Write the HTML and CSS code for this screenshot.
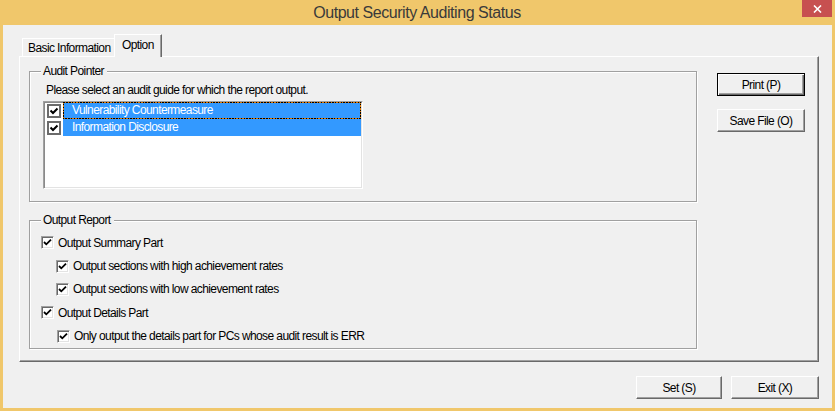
FILE: index.html
```html
<!DOCTYPE html>
<html>
<head>
<meta charset="utf-8">
<link rel="stylesheet" href="styles.css">
</head>
<body>
<div class="window">
  <div class="titlebar">
    <div class="title">Output Security Auditing Status</div>
    <div class="close">
      <svg width="9" height="8" viewBox="0 0 9 8"><path d="M1 0.5 L8 7.5 M8 0.5 L1 7.5" stroke="#fff" stroke-width="1.6" fill="none"/></svg>
    </div>
  </div>
  <div class="client">
    <div class="tabs">
      <div class="tab tab-basic">Basic Information</div>
      <div class="tab tab-option">Option</div>
    </div>
    <div class="panel">
      <div class="groups">
        <fieldset class="group audit">
          <legend>Audit Pointer</legend>
          <div class="hint">Please select an audit guide for which the report output.</div>
          <div class="listbox">
            <div class="item">
              <span class="lcb"><svg width="10" height="10" viewBox="0 0 10 10"><path d="M1.5 4.5 L4 7 L8.5 2.5" stroke="#000" stroke-width="2" fill="none"/></svg></span>
              <span class="label focus">Vulnerability Countermeasure</span>
            </div>
            <div class="item">
              <span class="lcb"><svg width="10" height="10" viewBox="0 0 10 10"><path d="M1.5 4.5 L4 7 L8.5 2.5" stroke="#000" stroke-width="2" fill="none"/></svg></span>
              <span class="label">Information Disclosure</span>
            </div>
          </div>
        </fieldset>
        <fieldset class="group report">
          <legend>Output Report</legend>
          <div class="row lvl0"><span class="cb"><svg width="11" height="11" viewBox="0 0 11 11"><path d="M2 5 L4.3 7.3 L9 2.6" stroke="#000" stroke-width="1.8" fill="none"/></svg></span>Output Summary Part</div>
          <div class="row lvl1"><span class="cb"><svg width="11" height="11" viewBox="0 0 11 11"><path d="M2 5 L4.3 7.3 L9 2.6" stroke="#000" stroke-width="1.8" fill="none"/></svg></span>Output sections with high achievement rates</div>
          <div class="row lvl1"><span class="cb"><svg width="11" height="11" viewBox="0 0 11 11"><path d="M2 5 L4.3 7.3 L9 2.6" stroke="#000" stroke-width="1.8" fill="none"/></svg></span>Output sections with low achievement rates</div>
          <div class="row lvl0"><span class="cb"><svg width="11" height="11" viewBox="0 0 11 11"><path d="M2 5 L4.3 7.3 L9 2.6" stroke="#000" stroke-width="1.8" fill="none"/></svg></span>Output Details Part</div>
          <div class="row lvl2"><span class="cb"><svg width="11" height="11" viewBox="0 0 11 11"><path d="M2 5 L4.3 7.3 L9 2.6" stroke="#000" stroke-width="1.8" fill="none"/></svg></span>Only output the details part for PCs whose audit result is ERR</div>
        </fieldset>
      </div>
      <div class="side">
        <button class="btn btn-default">Print (P)</button>
        <button class="btn">Save File (O)</button>
      </div>
    </div>
    <div class="footer">
      <button class="btn btn-set">Set (S)</button>
      <button class="btn btn-exit">Exit (X)</button>
    </div>
  </div>
</div>
</body>
</html>
```
FILE: styles.css
```css
* { box-sizing: border-box; }
body {
  margin: 0;
  font-family: "Liberation Sans", Arial, sans-serif;
  font-size: 12px;
  letter-spacing: -0.6px;
  color: #000;
}
.window {
  width: 835px;
  height: 411px;
  background: #f0c76b;
  display: flex;
  flex-direction: column;
}
.titlebar {
  height: 25px;
  display: grid;
  grid-template-columns: 1fr auto 1fr;
  padding-right: 3px;
}
.title {
  grid-column: 2;
  font-size: 16px;
  letter-spacing: -0.45px;
  line-height: 25px;
  color: #3a3a3a;
  padding-left: 2px;
}
.close {
  grid-column: 3;
  justify-self: end;
  width: 30px;
  height: 17px;
  background: #c75050;
  display: flex;
  align-items: center;
  justify-content: center;
}
.client {
  flex: 1;
  margin: 0 3px 3px;
  background: #f0f0f0;
  padding: 9px 13px 0 16px;
  display: flex;
  flex-direction: column;
}
.tabs {
  display: flex;
  align-items: flex-start;
  height: 23px;
  margin-bottom: -1px;
  position: relative;
  z-index: 1;
}
.tab {
  background: #f0f0f0;
  border-top: 1px solid #fff;
  border-left: 1px solid #fff;
  line-height: 16px;
  white-space: nowrap;
}
.tab-basic {
  margin-top: 4px;
  margin-left: 3px;
  width: 92px;
  height: 18px;
  padding: 1px 0 0 5px;
}
.tab-option {
  width: 48px;
  height: 23px;
  padding: 2px 0 0 7px;
  border-right: 1px solid #696969;
  box-shadow: inset -1px 0 0 #a0a0a0;
}
.panel {
  width: 800px;
  height: 306px;
  border: 1px solid;
  border-color: #fff #696969 #696969 #fff;
  box-shadow: inset -1px -1px 0 #a0a0a0;
  display: flex;
  align-items: flex-start;
  padding: 7px 0 0 9px;
}
.groups {
  width: 668px;
  display: flex;
  flex-direction: column;
}
.group {
  margin: 0;
  border: 1px solid #a0a0a0;
  box-shadow: 1px 1px 0 #fff, inset 1px 1px 0 #fff;
  padding: 0 0 0 13px;
  min-width: 0;
}
.group legend {
  padding: 0 3px 0 2px;
  margin-left: -2px;
  line-height: 14px;
  background: #f0f0f0;
}
.audit {
  padding-top: 5px;
  padding-bottom: 12px;
}
.hint {
  line-height: 14px;
  margin-left: 3px;
  margin-bottom: 4px;
}
.listbox {
  width: 320px;
  height: 88px;
  background: #fff;
  border: 1px solid;
  border-color: #a0a0a0 #fff #fff #a0a0a0;
  box-shadow: inset 1px 1px 0 #8a8a8a, inset -1px -1px 0 #e3e3e3;
  padding: 0 1px 0 2px;
}
.item {
  display: flex;
  align-items: center;
  height: 17px;
}
.lcb {
  width: 14px;
  height: 14px;
  border: 2px solid #6b6b6b;
  background: #fff;
  display: flex;
  align-items: center;
  justify-content: center;
  margin-left: 1px;
  flex: none;
}
.label {
  margin-left: 2px;
  flex: 1;
  height: 17px;
  background: #3399ff;
  color: #fff;
  padding-left: 9px;
  line-height: 16px;
  white-space: nowrap;
}
.label.focus {
  border: 1px solid transparent;
  border-image: repeating-linear-gradient(45deg, #000 0 1px, #e07800 1px 2px) 1;
  padding-left: 8px;
  line-height: 14px;
}
.report {
  margin-top: 11px;
  padding-top: 4px;
  padding-bottom: 0;
}
.row {
  height: 23.4px;
  display: flex;
  align-items: center;
  white-space: nowrap;
}
.lvl0 { margin-left: -2px; }
.lvl1 { margin-left: 13px; }
.lvl2 { margin-left: 14px; }
.cb {
  width: 13px;
  height: 13px;
  flex: none;
  background: #fff;
  border: 1px solid;
  border-color: #a0a0a0 #fff #fff #a0a0a0;
  box-shadow: inset 1px 1px 0 #696969, inset -1px -1px 0 #e3e3e3;
  display: flex;
  align-items: center;
  justify-content: center;
  margin-right: 4px;
}
.side {
  margin-left: 20px;
  margin-top: 9px;
  display: flex;
  flex-direction: column;
  gap: 13px;
}
.btn {
  font: inherit;
  letter-spacing: inherit;
  color: #000;
  background: #f0f0f0;
  border: 1px solid;
  border-color: #fff #696969 #696969 #fff;
  box-shadow: inset -1px -1px 0 #a0a0a0;
  padding: 0;
  width: 88px;
  height: 23px;
  line-height: 20px;
}
.btn-default {
  border: 1px solid #000;
  box-shadow: inset 1px 1px 0 #fff, inset -1px -1px 0 #696969, inset -2px -2px 0 #a0a0a0;
}
.footer {
  display: flex;
  justify-content: flex-end;
  gap: 9px;
  margin-top: 14px;
}
.btn-set { width: 86px; }
.btn-exit { width: 88px; }
```
